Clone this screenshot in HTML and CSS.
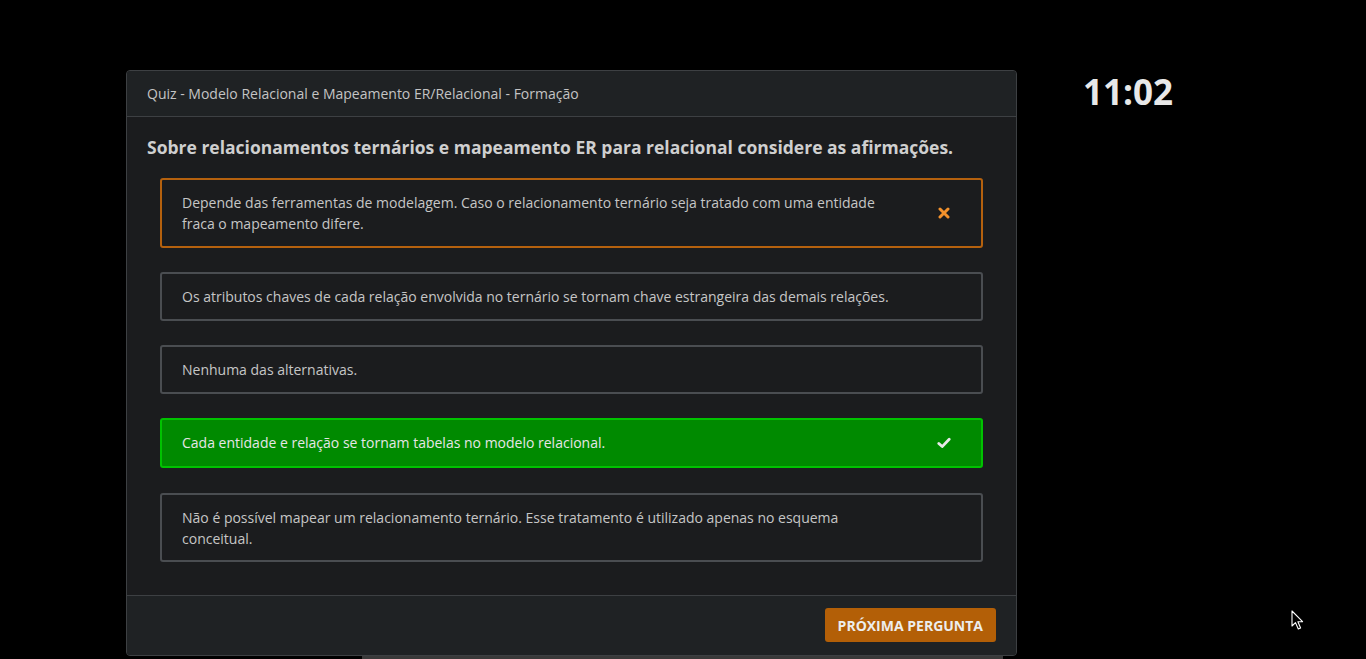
FILE: index.html
```html
<!DOCTYPE html>
<html lang="pt">
<head>
<meta charset="utf-8">
<title>Quiz</title>
<link rel="stylesheet" href="styles.css">
</head>
<body>
<div class="page">
  <div class="main">
    <section class="card">
      <header class="card-header">Quiz - Modelo Relacional e Mapeamento ER/Relacional - Formação</header>
      <div class="card-body">
        <h2 class="question">Sobre relacionamentos ternários e mapeamento ER para relacional considere as afirmações.</h2>
        <ul class="options">
          <li class="option wrong">
            <span class="opt-text">Depende das ferramentas de modelagem. Caso o relacionamento ternário seja tratado com uma entidade fraca o mapeamento difere.</span>
            <span class="opt-icon">
              <svg width="12" height="12" viewBox="0 0 12 12"><path d="M2 2 L10 10 M10 2 L2 10" stroke="#f3912c" stroke-width="3" stroke-linecap="round"/></svg>
            </span>
          </li>
          <li class="option">
            <span class="opt-text">Os atributos chaves de cada relação envolvida no ternário se tornam chave estrangeira das demais relações.</span>
            <span class="opt-icon"></span>
          </li>
          <li class="option">
            <span class="opt-text">Nenhuma das alternativas.</span>
            <span class="opt-icon"></span>
          </li>
          <li class="option right">
            <span class="opt-text">Cada entidade e relação se tornam tabelas no modelo relacional.</span>
            <span class="opt-icon">
              <svg width="14" height="12" viewBox="0 0 14 12"><path d="M1.8 6.4 L5.2 9.6 L12.2 2.2" fill="none" stroke="#e8e8e8" stroke-width="2.8" stroke-linecap="round" stroke-linejoin="round"/></svg>
            </span>
          </li>
          <li class="option last">
            <span class="opt-text">Não é possível mapear um relacionamento ternário. Esse tratamento é utilizado apenas no esquema conceitual.</span>
            <span class="opt-icon"></span>
          </li>
        </ul>
      </div>
      <footer class="card-footer">
        <button class="btn-next" type="button">Próxima pergunta</button>
      </footer>
    </section>
    <div class="under-strip"></div>
  </div>
  <aside class="timer">11:02</aside>
</div>
<svg class="cursor" width="14" height="22" viewBox="0 0 14 22"><path d="M1 1 L1 16 L4.5 12.6 L7.3 19 L9.6 18 L6.9 11.8 L11.6 11.6 Z" fill="#000" stroke="#fff" stroke-width="1.1" stroke-linejoin="round"/></svg>
</body>
</html>
```

FILE: styles.css
```css
* { box-sizing: border-box; }
html, body {
  margin: 0;
  padding: 0;
  background: #000;
  height: 100%;
  overflow: hidden;
}
body {
  font-family: "Open Sans", "Noto Sans", sans-serif;
  color: #c9c9c9;
  position: relative;
}
.page {
  display: flex;
  align-items: flex-start;
  padding: 70px 0 0 126px;
}
.main {
  width: 891px;
  display: flex;
  flex-direction: column;
}
.card {
  border: 1px solid #3d4043;
  border-radius: 4px;
  background: #1b1c1e;
  overflow: hidden;
}
.card-header {
  background: #1f2224;
  border-bottom: 1px solid #3d4043;
  height: 46px;
  padding: 0 20px;
  font-size: 14px;
  line-height: 46px;
  color: #c4c4c4;
}
.card-body {
  padding: 18px 0 33px 0;
}
.question {
  margin: 0 20px 19px 20px;
  font-size: 17.5px;
  line-height: 24px;
  font-weight: 700;
  color: #cfcfcf;
}
.options {
  list-style: none;
  margin: 0;
  padding: 0 33px;
  display: flex;
  flex-direction: column;
  gap: 24px;
}
.option {
  display: flex;
  align-items: center;
  border: 2px solid #4a4d51;
  border-radius: 3px;
  padding: 12px 0 12px 20px;
  font-size: 14px;
  line-height: 21px;
  color: #c6c6c6;
}
.opt-text {
  flex: 1;
}
.opt-icon {
  width: 70px;
  margin-right: 2px;
  flex: none;
  display: flex;
  justify-content: center;
}
.option.wrong {
  border-color: #b5610e;
}
.option.right {
  background: #008a00;
  border-color: #00c200;
  color: #e6e6e6;
  padding-bottom: 13px;
  margin-bottom: 1px;
}
.option.last {
  padding-bottom: 11px;
}
.card-footer {
  background: #1f2224;
  border-top: 1px solid #3d4043;
  display: flex;
  justify-content: flex-end;
  padding: 12px 20px 13px 20px;
}
.btn-next {
  background: #b35f07;
  color: #ededed;
  border: 0;
  border-radius: 3px;
  height: 34px;
  padding: 0 13px;
  font-family: "Open Sans", "Noto Sans", sans-serif;
  font-size: 14px;
  font-weight: 700;
  text-transform: uppercase;
}
.under-strip {
  margin-left: 236px;
  width: 641px;
  height: 10px;
  background: #3a3a3a;
}
.timer {
  margin-left: 66px;
  font-size: 35px;
  font-weight: 700;
  line-height: 44px;
  color: #e8e8e8;
}
.cursor {
  position: absolute;
  left: 1291px;
  top: 610px;
}
```
